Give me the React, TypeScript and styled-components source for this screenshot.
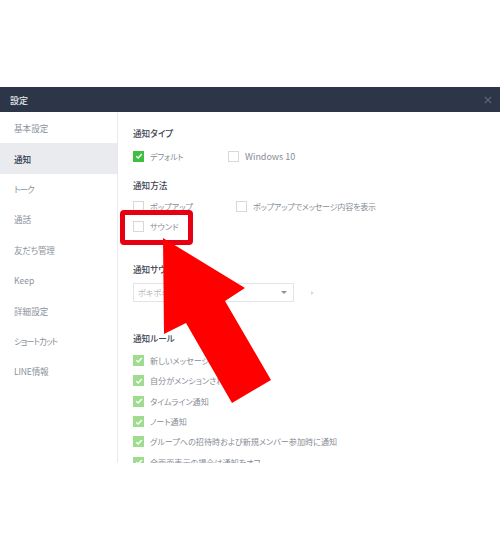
import React from "react";
import styled, { createGlobalStyle } from "styled-components";

const Global = createGlobalStyle`
  html, body { margin: 0; padding: 0; background: #fff; }
  body { font-family: "Noto Sans CJK JP", "Noto Sans", sans-serif; font-feature-settings: "palt"; }
`;
const Page = styled.div`
  position: relative; width: 500px; height: 550px; padding-top: 87px; box-sizing: border-box; overflow: hidden;
`;
const Window = styled.div`
  height: 376px; display: flex; flex-direction: column; overflow: hidden;
`;
const TitleBar = styled.header`
  height: 25px; flex: none; background: #2c3648; color: #e4e7ec; font-size: 9px; font-weight: 500;
  display: flex; align-items: center; justify-content: space-between; padding: 1px 8px 0 10px; box-sizing: border-box;
`;
const Body = styled.div`
  flex: 1; display: flex; min-height: 0;
`;
const Sidebar = styled.nav`
  width: 117px; flex: none; border-right: 1px solid #e8e9ec; padding-top: 1.1px;
`;
const NavItem = styled.div<{ $active?: boolean; $track?: number }>`
  height: 30.4px; display: flex; align-items: center; padding-left: 14px; font-size: 8.6px;
  letter-spacing: ${(p) => p.$track ?? 0}px;
  color: ${(p) => (p.$active ? "#2b3445" : "#8d929b")};
  background: ${(p) => (p.$active ? "#e9ebef" : "transparent")};
  font-weight: ${(p) => (p.$active ? 500 : 400)};
`;
const Content = styled.main`
  flex: 1; min-height: 0; overflow: hidden; padding: 14px 0 0 15px; display: flex; flex-direction: column;
`;
const Title = styled.h3<{ $top?: number }>`
  flex: none; margin: ${(p) => p.$top ?? 0}px 0 0; height: 14px; line-height: 14px; font-size: 8.6px; font-weight: 500; color: #3a4150;
`;
const Row = styled.div<{ $top?: number }>`
  flex: none; display: flex; align-items: center; height: 20.4px; margin-top: ${(p) => p.$top ?? 0}px;
`;
const Opt = styled.label<{ $w?: number; $latin?: boolean; $track?: number }>`
  display: flex; align-items: center; gap: 6px; font-size: ${(p) => (p.$latin ? "9px" : "8.1px")}; color: #878c95;
  letter-spacing: ${(p) => p.$track ?? 0}px;
  width: ${(p) => (p.$w ? `${p.$w}px` : "auto")};
`;
const Box = styled.span<{ $state?: "on" | "soft" }>`
  width: 11px; height: 11px; flex: none; box-sizing: border-box; display: inline-flex; align-items: center; justify-content: center;
  border: 1px solid ${(p) => (p.$state === "on" ? "#3fbf3f" : p.$state === "soft" ? "#9fdc8f" : "#d6d8dc")};
  background: ${(p) => (p.$state === "on" ? "#3fbf3f" : p.$state === "soft" ? "#9fdc8f" : "#fff")};
`;
const Select = styled.div`
  width: 161px; height: 19px; box-sizing: border-box; border: 1px solid #e3e4e7; display: flex; align-items: center;
  justify-content: space-between; padding: 0 6px 0 4px; font-size: 8.1px; color: #b5b8bd;
`;
const Caret = styled.span`
  width: 0; height: 0; border-left: 3px solid transparent; border-right: 3px solid transparent; border-top: 3px solid #8f939a;
`;
const SelectRow = styled.div`
  flex: none; display: flex; align-items: center; gap: 17px; margin-top: 7px;
`;
const Play = styled.span`
  width: 0; height: 0; border-left: 3px solid #d8dadd; border-top: 2px solid transparent; border-bottom: 2px solid transparent;
`;
const Highlight = styled.div`
  position: absolute; left: 120px; top: 210px; width: 73px; height: 35px; box-sizing: border-box; border: 5px solid #e60012; border-radius: 4px;
`;
const Arrow = styled.svg`
  position: absolute; left: 0; top: 0; width: 500px; height: 550px; pointer-events: none;
`;

const Check = () => (
  <svg width="8" height="8" viewBox="0 0 8 8" fill="none">
    <path d="M1.2 4.2 3.2 6 6.8 2" stroke="#fff" strokeWidth="1.5" />
  </svg>
);
const Option = ({ state, children, w, latin, track }: { state?: "on" | "soft"; children: React.ReactNode; w?: number; latin?: boolean; track?: number }) => (
  <Opt $w={w} $latin={latin} $track={track}>
    <Box $state={state}>{state && <Check />}</Box>
    {children}
  </Opt>
);

const nav: [string, number][] = [
  ["基本設定", 0], ["通知", 0], ["トーク", -1], ["通話", 0], ["友だち管理", -0.3], ["Keep", 0], ["詳細設定", 0], ["ショートカット", -1.1], ["LINE情報", -0.2],
];
const rules = [
  "新しいメッセージ通知",
  "自分がメンションされたら通知",
  "タイムライン通知",
  "ノート通知",
  "グループへの招待時および新規メンバー参加時に通知",
  "全画面表示の場合は通知をオフ",
];

export default function App() {
  return (
    <Page>
      <Global />
      <Window>
        <TitleBar>
          <span>設定</span>
          <svg width="8" height="8" viewBox="0 0 8 8" stroke="#5f6878" strokeWidth="1.2">
            <path d="M.8.8l6.4 6.4M7.200.8.8 7.200" />
          </svg>
        </TitleBar>
        <Body>
          <Sidebar>
            {nav.map(([n, t]) => (
              <NavItem key={n} $active={n === "通知"} $track={t}>{n}</NavItem>
            ))}
          </Sidebar>
          <Content>
            <Title>通知タイプ</Title>
            <Row $top={6}>
              <Option state="on" w={95} track={-0.2}>デフォルト</Option>
              <Option latin>Windows 10</Option>
            </Row>
            <Title $top={12}>通知方法</Title>
            <Row $top={4}>
              <Option w={103}>ポップアップ</Option>
              <Option track={-0.25}>ポップアップでメッセージ内容を表示</Option>
            </Row>
            <Row>
              <Option>サウンド</Option>
            </Row>
            <Title $top={25}>通知サウンド</Title>
            <SelectRow>
              <Select>
                <span>ポキポキ</span>
                <Caret />
              </Select>
              <Play />
            </SelectRow>
            <Title $top={29}>通知ルール</Title>
            <Row $top={5}>
              <Option state="soft">{rules[0]}</Option>
            </Row>
            {rules.slice(1).map((r) => (
              <Row key={r}>
                <Option state="soft">{r}</Option>
              </Row>
            ))}
          </Content>
        </Body>
      </Window>
      <Highlight />
      <Arrow viewBox="0 0 500 550">
        <polygon points="163,238 245,288 225,301 271,380 232,403 186,323 164,334" fill="#ff0000" />
      </Arrow>
    </Page>
  );
}
